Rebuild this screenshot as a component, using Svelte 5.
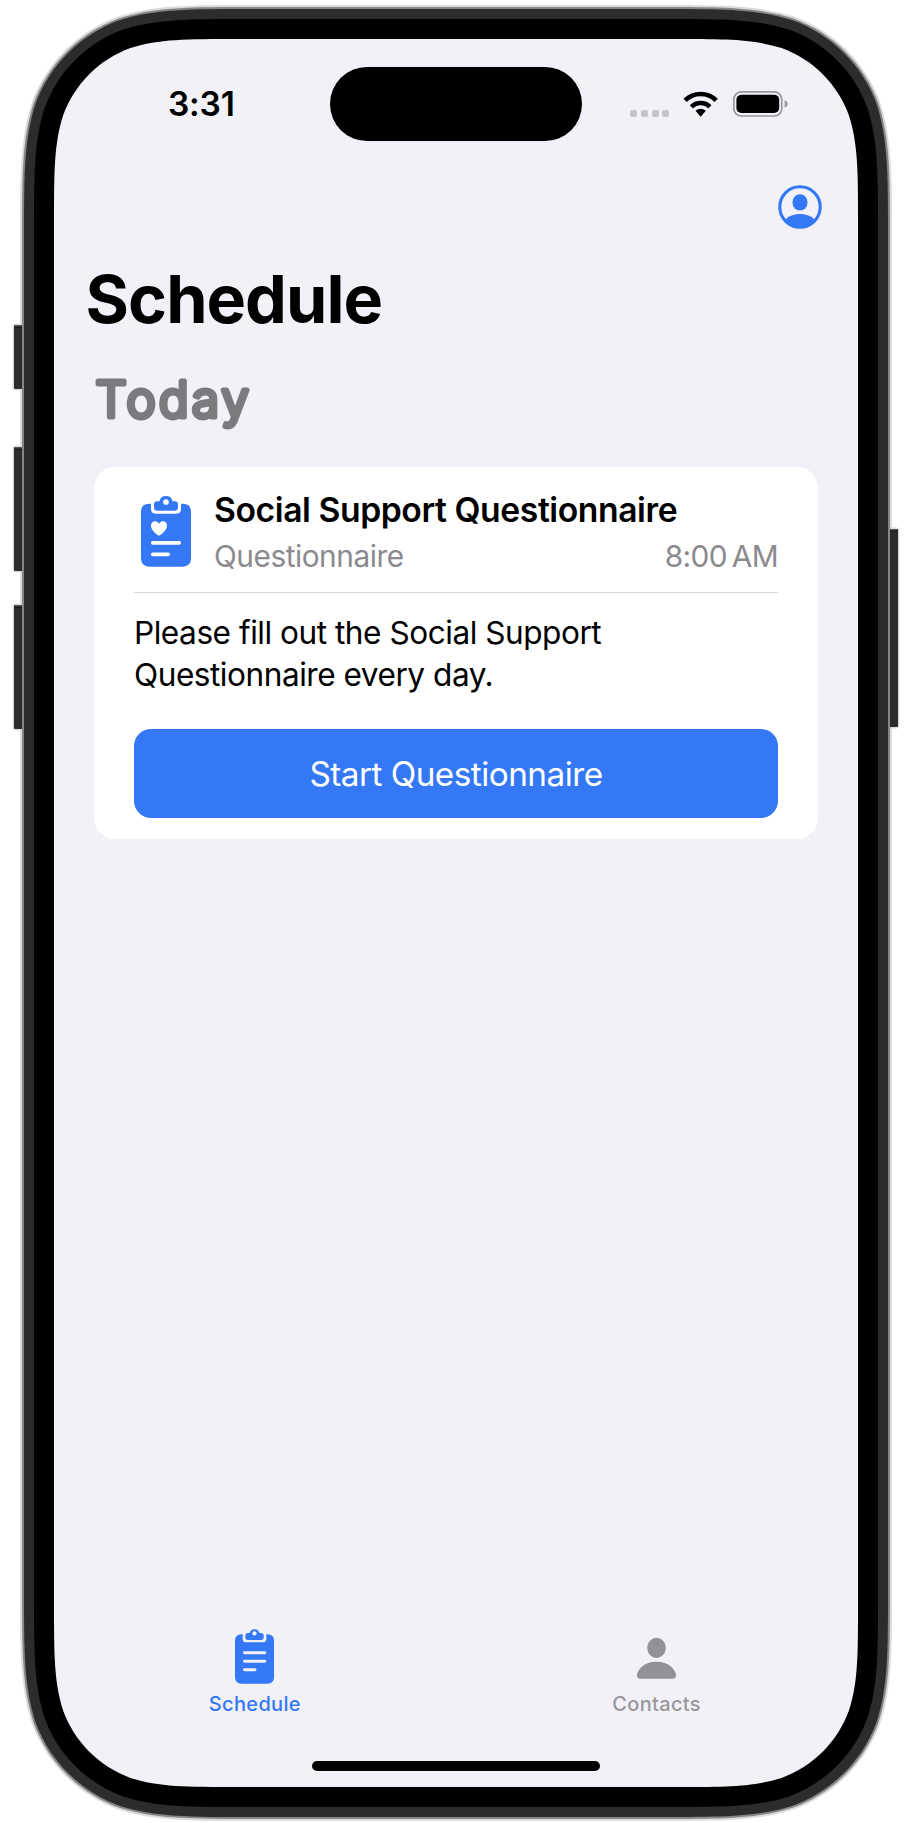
<script>
  // Continuous ("squircle") rounded rectangle outline
  function squircle(x, y, w, h, r) {
    const a = 1.528665 * r, b = 1.088493 * r, c = 0.868407 * r;
    const d = 0.631494 * r, e = 0.074911 * r, f = 0.372824 * r, g = 0.16906 * r;
    const X = x + w, Y = y + h;
    return [
      `M${x + a} ${y}H${X - a}`,
      `C${X - b} ${y} ${X - c} ${y} ${X - d} ${y + e}`,
      `C${X - f} ${y + g} ${X - g} ${y + f} ${X - e} ${y + d}`,
      `C${X} ${y + c} ${X} ${y + b} ${X} ${y + a}V${Y - a}`,
      `C${X} ${Y - b} ${X} ${Y - c} ${X - e} ${Y - d}`,
      `C${X - g} ${Y - f} ${X - f} ${Y - g} ${X - d} ${Y - e}`,
      `C${X - c} ${Y} ${X - b} ${Y} ${X - a} ${Y}H${x + a}`,
      `C${x + b} ${Y} ${x + c} ${Y} ${x + d} ${Y - e}`,
      `C${x + f} ${Y - g} ${x + g} ${Y - f} ${x + e} ${Y - d}`,
      `C${x} ${Y - c} ${x} ${Y - b} ${x} ${Y - a}V${y + a}`,
      `C${x} ${y + b} ${x} ${y + c} ${x + e} ${y + d}`,
      `C${x + g} ${y + f} ${x + f} ${y + g} ${x + d} ${y + e}`,
      `C${x + c} ${y} ${x + b} ${y} ${x + a} ${y}Z`
    ].join('');
  }

  const [rim, ...layers] = [
    { inset: 0, fill: '#dcdcdc' },
    { inset: 2, fill: '#868686' },
    { inset: 4, fill: '#2c2c2c' },
    { inset: 14, fill: '#000' },
    { inset: 34, fill: '#f2f1f7' }
  ].map((l) => ({
    fill: l.fill,
    d: squircle(20 + l.inset, 5 + l.inset, 872 - 2 * l.inset, 1816 - 2 * l.inset, 155 - l.inset)
  }));

  const keys = [
    { x: 14, y: 325, h: 64 },
    { x: 14, y: 447, h: 124 },
    { x: 14, y: 605, h: 124 },
    { x: 886, y: 529, h: 198 }
  ];

  const task = {
    title: 'Social Support Questionnaire',
    kind: 'Questionnaire',
    time: '8:00\u202FAM',
    text: 'Please fill out the Social Support Questionnaire every day.',
    action: 'Start Questionnaire'
  };
</script>

<div class="phone">
  <svg class="frame" viewBox="0 0 912 1823" aria-hidden="true">
    <path d={rim.d} fill={rim.fill} />
    {#each keys as k}
      <rect x={k.x - 1.5} y={k.y - 1.5} width="15" height={k.h + 3} rx="3" fill="#dcdcdc" />
      <rect x={k.x} y={k.y} width="12" height={k.h} rx="1.2" fill="#2c2c2c" />
      <rect x={k.x + 0.5} y={k.y} width="11" height="1.6" fill="#555" />
      <rect x={k.x + 0.5} y={k.y + 1.6} width="11" height="1.4" fill="#1c1c1c" />
    {/each}
    {#each layers as l}
      <path d={l.d} fill={l.fill} />
    {/each}
  </svg>

  <main class="screen">
    <header class="status">
      <span class="clock">3:31</span>
      <span class="island"></span>
      <div class="indicators">
        <span class="dots"><i></i><i></i><i></i><i></i></span>
        <svg class="wifi" viewBox="214 272 106 78" aria-hidden="true">
          <g fill="none" stroke="#000" stroke-width="14">
            <path d="M220.3 300.3A66 66 0 0 1 313.7 300.3" />
            <path d="M239.4 319.4A39 39 0 0 1 294.6 319.4" />
          </g>
          <path d="M251.5 331.5A22 22 0 0 1 282.5 331.5L268.4 348Q267 349.4 265.6 348Z" />
        </svg>
        <svg class="battery" viewBox="0 0 56 26" aria-hidden="true">
          <rect x=".8" y=".8" width="48" height="24.2" rx="7.6" fill="none" stroke="#98979c" stroke-width="1.7" />
          <rect x="3.4" y="3.8" width="42.8" height="18.2" rx="5" />
          <path d="M51.6 9.2Q54.6 10.3 54.6 12.9T51.6 16.6Z" fill="#98979c" />
        </svg>
      </div>
    </header>

    <nav class="toolbar">
      <svg class="profile" viewBox="-22 -22 44 44" aria-hidden="true">
        <clipPath id="ring"><circle r="21" /></clipPath>
        <circle r="20.2" fill="none" stroke="#3478f6" stroke-width="3.1" />
        <ellipse cy="-4.6" rx="7.5" ry="8.2" fill="#3478f6" />
        <path d="M-14.5 12.2C-10.5 8.6-5 7 0 7S10.5 8.6 14.5 12.2L18 22H-18Z" fill="#3478f6" clip-path="url(#ring)" />
      </svg>
    </nav>

    <h1>Schedule</h1>

    <section>
      <h2>
        <svg width="180" height="70" viewBox="0 0 180 70">
          <text x="1.6" y="51" textLength="153.2">Today</text>
        </svg>
      </h2>

      <article class="card">
        <div class="head">
          <svg class="board" viewBox="153 106 150 216" aria-hidden="true">
            <path
              fill="#3478f6"
              d="M177 132H183V148Q183 162 197 162H259Q273 162 273 148V132H279Q303 132 303 157V296Q303 321 278 321H178Q153 321 153 296V157Q153 132 177 132Z"
            />
            <path
              fill="#3478f6"
              fill-rule="evenodd"
              d="M202 125H208.5A19.8 19.8 0 0 1 247.5 125H254Q264 125 264 135V143Q264 153 254 153H202Q192 153 192 143V135Q192 125 202 125ZM228 118.5A8.5 8.5 0 1 0 228 135.5A8.5 8.5 0 1 0 228 118.5Z"
            />
            <path
              fill="#fff"
              d="M207 228.5C203 227 183 213 183 198.5C183 190 188.5 185 195 185C200.5 185 204.5 188 207 192.5C209.5 188 213.5 185 219 185C225.5 185 231 190 231 198.5C231 213 211 227 207 228.5Z"
            />
            <path d="M188.5 249.5H267.5M188.5 284H234.5" stroke="#fff" stroke-width="11.5" stroke-linecap="round" />
          </svg>
          <div class="info">
            <h3>{task.title}</h3>
            <div class="meta"><span>{task.kind}</span><span class="time">{task.time}</span></div>
          </div>
        </div>
        <hr />
        <p>{task.text}</p>
        <button>{task.action}</button>
      </article>
    </section>

    <footer class="tabs">
      <div class="tab active">
        <svg viewBox="135 56 117 168" width="39" height="56" aria-hidden="true">
          <path
            fill="currentColor"
            d="M154 75H158V88Q158 99 169 99H218Q229 99 229 88V75H233Q252 75 252 95V203Q252 223 232 223H155Q135 223 135 203V95Q135 75 154 75Z"
          />
          <path
            fill="currentColor"
            fill-rule="evenodd"
            d="M174 71H178.7A15.3 15.3 0 0 1 208.3 71H213Q221 71 221 79V84Q221 92 213 92H174Q166 92 166 84V79Q166 71 174 71ZM193.5 65.5A6.5 6.5 0 1 0 193.5 78.5A6.5 6.5 0 1 0 193.5 65.5Z"
          />
          <path d="M163.5 130H224.5M163.5 155.5H224.5M163.5 181.5H195" stroke="#f2f1f7" stroke-width="8.8" stroke-linecap="round" />
        </svg>
        <span>Schedule</span>
      </div>
      <div class="tab">
        <svg viewBox="0 0 39 56" width="39" height="56" aria-hidden="true">
          <ellipse cx="19.5" cy="19.8" rx="9.3" ry="10.1" fill="#929197" />
          <path d="M3.5 50.8C1.3 50.8 0 49.7 0 47.6C0 41.8 7.2 33.8 19.5 33.8S39 41.8 39 47.6C39 49.7 37.7 50.8 35.5 50.8Z" fill="#929197" />
        </svg>
        <span>Contacts</span>
      </div>
    </footer>
    <div class="home"></div>
  </main>
</div>

<style>
  :global(body) {
    margin: 0;
    background: #fff;
  }
  .phone {
    position: relative;
    width: 912px;
    height: 1823px;
    font-family: Inter, 'Liberation Sans', sans-serif;
    color: #000;
  }
  .frame {
    position: absolute;
    inset: 0;
    width: 912px;
    height: 1823px;
  }
  .screen {
    position: relative;
    box-sizing: border-box;
    width: 912px;
    height: 1823px;
    padding: 39px 54px 36px;
    display: flex;
    flex-direction: column;
  }
  h1, h2, h3, p {
    margin: 0;
  }
  .status {
    display: grid;
    grid-template-columns: 276px 252px 1fr;
    align-items: center;
    padding-top: 28px;
    height: 74px;
  }
  .clock {
    padding-left: 114px;
    font-size: 33.5px;
    font-weight: 600;
    line-height: 40px;
    letter-spacing: -0.2px;
  }
  .island {
    height: 74px;
    border-radius: 37px;
    background: #000;
  }
  .indicators {
    display: flex;
    align-items: flex-end;
    padding-left: 48.2px;
  }
  .dots {
    display: flex;
    gap: 3.7px;
    margin-right: 14px;
  }
  .dots i {
    width: 7px;
    height: 7px;
    border-radius: 2.2px;
    background: #c5c4c9;
  }
  .wifi {
    width: 35.3px;
    height: 26px;
    margin-right: 14px;
  }
  .battery {
    width: 56px;
    height: 26px;
  }
  .toolbar {
    display: flex;
    justify-content: flex-end;
    padding: 43.7px 35.7px 0 0;
    height: 73.8px;
  }
  .profile {
    width: 44px;
    height: 44px;
  }
  h1 {
    padding-left: 31.5px;
    font-size: 66.4px;
    font-weight: 700;
    line-height: 82px;
    letter-spacing: -0.95px;
  }
  section {
    padding: 0 40px;
  }
  h2 {
    height: 100px;
    margin-top: 26px;
    margin-bottom: 0.5px;
    font-size: 49px;
    font-weight: 300;
  }
  h2 svg {
    display: block;
  }
  h2 text {
    fill: #7b7b7d;
    stroke: #7b7b7d;
    stroke-width: 5px;
    stroke-linejoin: round;
  }
  .card {
    box-sizing: border-box;
    height: 372.5px;
    padding: 23.4px 40px 0;
    border-radius: 21px;
    background: #fff;
  }
  .head {
    display: flex;
  }
  .board {
    width: 50px;
    height: 72px;
    margin: 5px 23px 0 7px;
  }
  .info {
    flex: 1;
  }
  h3 {
    font-size: 33.7px;
    font-weight: 600;
    line-height: 40px;
    letter-spacing: -0.43px;
    white-space: nowrap;
  }
  .meta {
    display: flex;
    justify-content: space-between;
    margin-top: 7.6px;
    font-size: 29.8px;
    line-height: 37px;
    letter-spacing: -0.46px;
    color: #8a8a8e;
  }
  .time {
    letter-spacing: -0.6px;
  }
  hr {
    height: 1px;
    margin: 17px 0 19px;
    border: 0;
    background: #d8d8d9;
  }
  p {
    font-size: 31.6px;
    line-height: 42px;
    letter-spacing: -0.48px;
    max-width: 500px;
  }
  button {
    display: block;
    width: 100%;
    height: 88.2px;
    margin-top: 33.4px;
    padding: 1px 0 0;
    border: 0;
    border-radius: 17px;
    background: #3478f6;
    color: #fff;
    font: 400 33.3px/40px Inter, 'Liberation Sans', sans-serif;
    letter-spacing: -0.52px;
  }
  .tabs {
    display: grid;
    grid-template-columns: 1fr 1fr;
    margin-top: auto;
    padding-right: 0.5px;
  }
  .tab {
    display: flex;
    flex-direction: column;
    align-items: center;
    gap: 8px;
    color: #98979c;
    font-size: 20px;
    font-weight: 500;
    line-height: 24px;
    letter-spacing: 0.33px;
  }
  .tab.active {
    color: #3478f6;
  }
  .home {
    align-self: center;
    width: 288px;
    height: 10px;
    margin: 44.5px 1px 16.5px 0;
    border-radius: 5px;
    background: #000;
  }
</style>
